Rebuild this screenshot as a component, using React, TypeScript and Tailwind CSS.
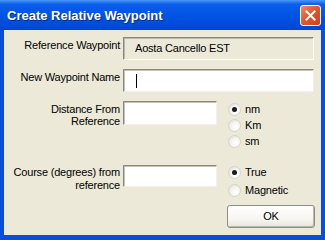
import React from "react";

function Radio({ label, checked, h }: { label: string; checked?: boolean; h: string }) {
  return (
    <div className={`flex items-center ${h}`}>
      <span className="flex h-[13px] w-[13px] items-center justify-center rounded-full border border-[#d6d4ca] bg-[radial-gradient(circle_at_65%_65%,#ffffff_0%,#f6f5f0_45%,#dcdad0_100%)]">
        {checked && <span className="h-[5px] w-[5px] rounded-full bg-[#1a1a1a]" />}
      </span>
      <span className="ml-[4px]">{label}</span>
    </div>
  );
}

export default function App() {
  return (
    <div
      className="flex h-[240px] w-[325px] flex-col bg-[#0a4fdc] text-[11px] leading-[13px] tracking-[-0.2px] text-black"
      style={{ fontFamily: '"Liberation Sans", Arial, sans-serif' }}
    >
      {/* Title bar */}
      <div className="flex h-[30px] shrink-0 items-center bg-[linear-gradient(to_bottom,#4a97f8_0%,#0b5eea_14%,#0054e3_55%,#0046d4_100%)] pl-[7px] pr-[4px]">
        <span className="text-[13px] font-bold tracking-[0px] text-white [text-shadow:1px_1px_0_#0a2a8a]">
          Create Relative Waypoint
        </span>
        <button className="ml-auto flex h-[21px] w-[21px] items-center justify-center rounded-[3px] border border-white bg-[linear-gradient(135deg,#f08a6a_0%,#e2582f_45%,#c9401b_100%)]">
          <svg width="11" height="11" viewBox="0 0 11 11">
            <path d="M1.5 1.5 L9.5 9.5 M9.5 1.5 L1.5 9.5" stroke="#ffffff" strokeWidth="2" strokeLinecap="square" />
          </svg>
        </button>
      </div>

      {/* Client area */}
      <div className="mx-[4px] mb-[5px] flex flex-1 flex-col bg-[#ece9d8] pt-[7px]">
        {/* Reference Waypoint */}
        <div className="flex h-[23px]">
          <div className="w-[119px] pr-[3px] pt-[2px] text-right">Reference Waypoint</div>
          <div className="flex h-[23px] w-[191px] items-center border border-t-[#8a8780] border-l-[#8a8780] border-b-[#ffffff] border-r-[#ffffff] bg-[#ece9d8] pl-[11px] shadow-[inset_1px_1px_0_#b9b6aa]">
            Aosta Cancello EST
          </div>
        </div>

        {/* New Waypoint Name */}
        <div className="mt-[9px] flex h-[23px]">
          <div className="w-[119px] pr-[3px] pt-[2px] text-right">New Waypoint Name</div>
          <div className="flex h-[23px] w-[191px] items-center border border-t-[#8a8780] border-l-[#8a8780] border-b-[#f2f0e8] border-r-[#f2f0e8] bg-white pl-[12px] shadow-[inset_1px_1px_0_#c4c1b6]">
            <span className="h-[14px] w-[1px] bg-black" />
          </div>
        </div>

        {/* Distance From Reference */}
        <div className="mt-[9px] flex">
          <div className="w-[119px] pr-[3px] pt-[2px] text-right leading-[12px]">
            Distance From
            <br />
            Reference
          </div>
          <div className="h-[24px] w-[94px] border border-t-[#8a8780] border-l-[#8a8780] border-b-[#f2f0e8] border-r-[#f2f0e8] bg-white shadow-[inset_1px_1px_0_#c4c1b6]" />
          <div className="ml-[11px] flex flex-col">
            <Radio label="nm" checked h="h-[16px]" />
            <Radio label="Km" h="h-[16px]" />
            <Radio label="sm" h="h-[16px]" />
          </div>
        </div>

        {/* Course */}
        <div className="mt-[16px] flex">
          <div className="w-[119px] pr-[3px] pt-[1px] text-right">
            Course (degrees) from
            <br />
            reference
          </div>
          <div className="h-[22px] w-[94px] border border-t-[#8a8780] border-l-[#8a8780] border-b-[#f2f0e8] border-r-[#f2f0e8] bg-white shadow-[inset_1px_1px_0_#c4c1b6]" />
          <div className="-mt-[2px] ml-[11px] flex flex-col">
            <Radio label="True" checked h="h-[18px]" />
            <Radio label="Magnetic" h="h-[18px]" />
          </div>
        </div>

        {/* OK */}
        <div className="mt-[6px] flex justify-end pr-[6px]">
          <button className="flex h-[23px] w-[88px] items-center justify-center rounded-[3px] border border-[#8f8d85] bg-[linear-gradient(to_bottom,#ffffff_0%,#f7f6f1_60%,#e7e5dc_100%)] shadow-[inset_-1px_-1px_0_#b9b6aa]">
            OK
          </button>
        </div>
      </div>
    </div>
  );
}
